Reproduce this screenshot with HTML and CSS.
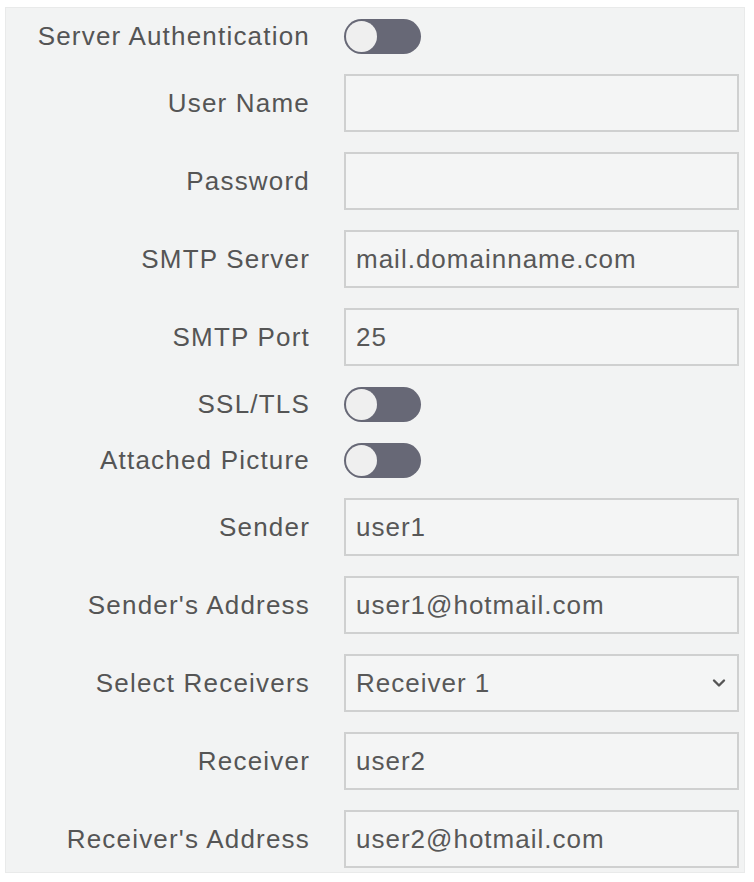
FILE: index.html
```html
<!DOCTYPE html>
<html lang="en">
<head>
<meta charset="utf-8">
<title>Email Settings</title>
<link rel="stylesheet" href="styles.css">
</head>
<body>
<form class="panel">
  <div class="row row-toggle">
    <label class="label">Server Authentication</label>
    <div class="field"><span class="switch"><span class="knob"></span></span></div>
  </div>
  <div class="row">
    <label class="label">User Name</label>
    <div class="field"><div class="input"></div></div>
  </div>
  <div class="row">
    <label class="label">Password</label>
    <div class="field"><div class="input"></div></div>
  </div>
  <div class="row">
    <label class="label">SMTP Server</label>
    <div class="field"><div class="input">mail.domainname.com</div></div>
  </div>
  <div class="row">
    <label class="label">SMTP Port</label>
    <div class="field"><div class="input">25</div></div>
  </div>
  <div class="row row-toggle">
    <label class="label">SSL/TLS</label>
    <div class="field"><span class="switch"><span class="knob"></span></span></div>
  </div>
  <div class="row row-toggle">
    <label class="label">Attached Picture</label>
    <div class="field"><span class="switch"><span class="knob"></span></span></div>
  </div>
  <div class="row">
    <label class="label">Sender</label>
    <div class="field"><div class="input">user1</div></div>
  </div>
  <div class="row">
    <label class="label">Sender's Address</label>
    <div class="field"><div class="input">user1@hotmail.com</div></div>
  </div>
  <div class="row">
    <label class="label">Select Receivers</label>
    <div class="field">
      <div class="input select">
        <span>Receiver 1</span>
        <svg class="chevron" width="16" height="10" viewBox="0 0 16 10"><path d="M3 2.5 L8 7.5 L13 2.5" fill="none" stroke="#555" stroke-width="2.4" stroke-linecap="round" stroke-linejoin="round"/></svg>
      </div>
    </div>
  </div>
  <div class="row">
    <label class="label">Receiver</label>
    <div class="field"><div class="input">user2</div></div>
  </div>
  <div class="row">
    <label class="label">Receiver's Address</label>
    <div class="field"><div class="input">user2@hotmail.com</div></div>
  </div>
</form>
</body>
</html>
```

FILE: styles.css
```css
html, body {
  margin: 0;
  padding: 0;
  background: #ffffff;
}

body {
  font-family: "Liberation Sans", Arial, sans-serif;
  padding: 7px 0 0 5px;
}

.panel {
  width: 740px;
  height: 866px;
  box-sizing: border-box;
  background: #f2f3f3;
  border: 1px solid #e9eaea;
  padding: 10px 6px 0 0;
  display: flex;
  flex-direction: column;
  gap: 20px;
}

.row {
  display: grid;
  grid-template-columns: 303px 395px;
  column-gap: 35px;
  align-items: center;
  height: 58px;
}

.row-toggle {
  height: 36px;
}

.label {
  text-align: right;
  font-size: 26px;
  letter-spacing: 1.2px;
  color: #555555;
  white-space: nowrap;
  margin-right: -1px;
}

.field {
  display: flex;
  align-items: center;
}

.input {
  box-sizing: border-box;
  width: 100%;
  height: 58px;
  border: 2px solid #cfd0d0;
  background: #f4f5f5;
  padding: 0 10px;
  display: flex;
  align-items: center;
  font-size: 26px;
  letter-spacing: 1px;
  color: #585858;
}

.select {
  justify-content: space-between;
  padding-right: 10px;
}

.chevron {
  display: block;
}

.switch {
  width: 77px;
  height: 35px;
  border-radius: 18px;
  background: #676876;
  display: flex;
  align-items: center;
  padding: 0 2px;
  box-sizing: border-box;
}

.knob {
  width: 31px;
  height: 31px;
  border-radius: 50%;
  background: #efefef;
}
```
